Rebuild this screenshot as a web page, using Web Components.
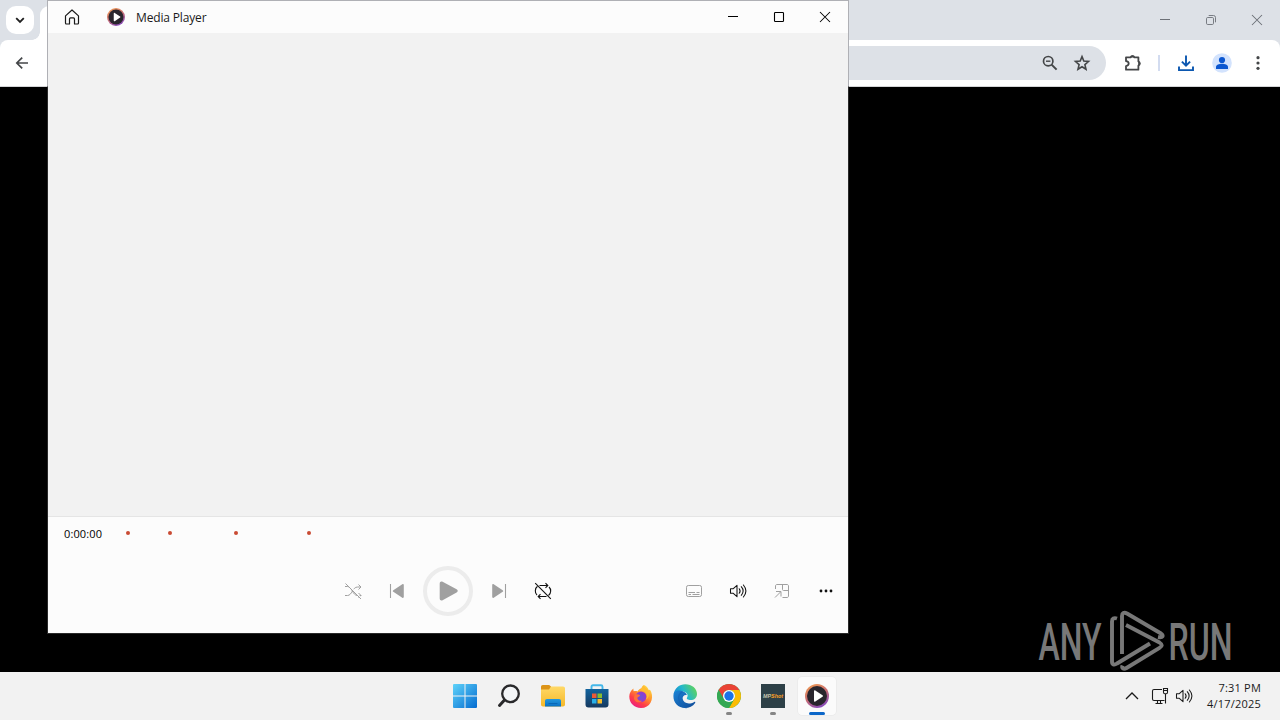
<!DOCTYPE html>
<html lang="en">
<head>
<meta charset="utf-8">
<title>Desktop</title>
<style>
    html, body {
        margin: 0;
        width: 1280px;
        height: 720px;
        overflow: hidden;
        background: #000;
        font-family: "Open Sans", "Noto Sans", sans-serif;
    }
</style>
</head>
<body>
<desk-top>
    <browser-window></browser-window>
    <media-player title-text="Media Player" time="0:00:00"></media-player>
    <any-run></any-run>
    <task-bar slot="taskbar">
        <task-button icon="start"></task-button>
        <task-button icon="search"></task-button>
        <task-button icon="folder"></task-button>
        <task-button icon="store"></task-button>
        <task-button icon="firefox"></task-button>
        <task-button icon="edge"></task-button>
        <task-button icon="chrome" running></task-button>
        <task-button icon="mpshot" running></task-button>
        <task-button icon="player" running active></task-button>
        <span slot="time">7:31 PM</span>
        <span slot="date">4/17/2025</span>
    </task-bar>
</desk-top>

<script>
// each entry: [viewBox size, markup]
const ICONS = {
    minimize: [12, '<path d="M1 5.5h10" stroke="currentColor"/>'],
    maximize: [12, '<rect x="1.5" y="1.5" width="9" height="9" rx=".8" fill="none" stroke="currentColor" stroke-width="1.1"/>'],
    restore: [12, '<g fill="none" stroke="currentColor" stroke-width=".9"><rect x="1.5" y="3.5" width="7" height="7" rx="1.2"/><path d="M3.7 1.5H8.5a2 2 0 0 1 2 2V8.3"/></g>'],
    close: [12, '<path d="M1 1l10 10M11 1L1 11" stroke="currentColor" stroke-width="1.05"/>'],
    chevron: [12, '<path d="M2.2 4.1L6 7.9l3.8-3.8" fill="none" stroke="currentColor" stroke-width="1.8"/>'],
    back: [16, '<path d="M14 8H3M8.2 2.6L2.8 8l5.4 5.4" fill="none" stroke="currentColor" stroke-width="1.7"/>'],
    zoomout: [16, '<g fill="none" stroke="currentColor" stroke-width="1.7"><circle cx="6.2" cy="6.2" r="4.7"/><path d="M9.6 9.6l5 5" stroke-width="2"/><path d="M4 6.2h4.4" stroke-width="1.4"/></g>'],
    star: [18, '<path d="M9 2.6l1.800 4.500 4.700.4-3.600 3.100 1.100 4.600L9 12.700l-4 2.500 1.100-4.600L2.500 7.500l4.700-.4z" fill="none" stroke="currentColor" stroke-width="1.600"/>'],
    puzzle: [20, '<path d="M4 4.300h4.600a2.100 2.100 0 0 1 3.800 0h4v4.200a2.200 2.200 0 0 1 0 4v4.200H4v-3.600c1.900-.2 2.700-1.200 2.700-2.500S5.900 8.300 4 8.100z" fill="none" stroke="currentColor" stroke-width="1.800" stroke-linejoin="round"/><path d="M8.200 4.600a2.300 2.300 0 0 1 4.600 0zM16.200 8.200a2.300 2.300 0 0 1 0 4.600z" fill="currentColor"/>'],
    download: [18, '<path d="M9 1.500v10M4.900 7.600L9 11.700l4.100-4.100M2 12.400v3.700h14v-3.700" fill="none" stroke="currentColor" stroke-width="1.900"/>'],
    avatar: [20, '<circle cx="10" cy="10" r="9.800" fill="#d3e3fd"/><circle cx="10" cy="7" r="3.100" fill="#0b57d0"/><path d="M4 16v-2.100c0-2.200 3.200-3.200 6-3.200s6 1 6 3.200V16z" fill="#0b57d0"/>'],
    kebab: [18, '<g fill="currentColor"><circle cx="9" cy="3.700" r="1.600"/><circle cx="9" cy="9" r="1.600"/><circle cx="9" cy="14.300" r="1.600"/></g>'],

    home: [16, '<path d="M1.500 6.900L8 1l6.500 5.900v7.200a.9.900 0 0 1-.9.900h-3.100V9.900a1 1 0 0 0-1-1h-3a1 1 0 0 0-1 1V15H2.400a.9.900 0 0 1-.9-.9z" fill="none" stroke="currentColor" stroke-width="1.200" stroke-linejoin="round"/>'],
    shuffle: [18, '<g fill="none" stroke="currentColor"><path d="M1 4.500h2.500c4.500 0 5 9 10 9H17M1 13.500h2.500c4.500 0 5-8.500 10-8.500H17M14.500 2.500L17 5l-2.500 2.500M14.500 11l2.500 2.500-2.500 2.500"/><path d="M2.500 1l15 15.500" stroke="#fcfcfc" stroke-width="1.500"/><path d="M1.500 1.500l15.500 15.500"/></g>'],
    prev: [16, '<path d="M1.500 1v14" stroke="currentColor" stroke-width="1.100"/><path d="M4.300 7.200l9-5.900c.8-.5 1.500 0 1.500.9v11.600c0 .9-.7 1.400-1.500.9l-9-5.900c-.7-.5-.7-1.100 0-1.600z" fill="currentColor"/>'],
    next: [16, '<path d="M14.500 1v14" stroke="currentColor" stroke-width="1.100"/><path d="M11.700 7.200l-9-5.900c-.8-.5-1.500 0-1.500.9v11.600c0 .9.700 1.400 1.500.9l9-5.900c.7-.5.7-1.100 0-1.600z" fill="currentColor"/>'],
    play: [24, '<path d="M3.700 4.500c0-1.700 1.400-2.500 2.900-1.700l14 7.500c1.500.8 1.500 2.400 0 3.200l-14 7.700c-1.500.8-2.900 0-2.900-1.700z" fill="currentColor"/>'],
    repeat: [18, '<g fill="none" stroke="currentColor" stroke-width="1.100"><path d="M5.500 3.500h8M11.500 1.200l2.300 2.300-2.300 2.300M12.500 14.500h-8M6.500 12.200l-2.300 2.300 2.300 2.300M3.500 4.300C.7 6.300.7 11 3 13M14.500 13.500c2.800-2 2.800-6.500.5-8.500"/><path d="M1.200 1.200l15.600 15.600"/></g>'],
    captions: [18, '<g fill="none" stroke="currentColor"><rect x="1.500" y="3.500" width="15" height="11" rx="1.800"/><path d="M3.500 10.500h6.500M11.500 10.500h3M3.500 12.500h2.500M7.500 12.500h7"/></g>'],
    volume: [18, '<g fill="none" stroke="currentColor" stroke-width="1.050" stroke-linejoin="round"><path d="M1.500 6.700h2.800L8 3.300v11.400l-3.700-3.400H1.500z"/><path d="M10.200 6.700c1.100 1.400 1.100 3.200 0 4.600M12.300 4.700c2.200 2.600 2.200 6 0 8.600M14.400 3c3.100 3.700 3.100 8.300 0 12" stroke-linecap="round"/></g>'],
    mini: [18, '<g fill="none" stroke="currentColor"><path d="M2.500 7V4c0-1 .7-1.500 1.500-1.500h10c1 0 1.500.7 1.500 1.500v10c0 1-.7 1.500-1.500 1.500H9.500M9.500 2.500v5c0 .8.500 1 1 1h5M2 15.500L7.500 10M3 9.500h5v5"/></g>'],
    more: [18, '<g fill="currentColor"><circle cx="4" cy="9" r="1.400"/><circle cx="9" cy="9" r="1.400"/><circle cx="14" cy="9" r="1.400"/></g>'],

    up: [16, '<path d="M2 11l6-6 6 6" fill="none" stroke="currentColor" stroke-width="1.300"/>'],
    network: [18, '<g fill="none" stroke="currentColor" stroke-width="1.100"><path d="M11 2.500H3c-1 0-1.500.6-1.500 1.500v8c0 1 .6 1.500 1.500 1.500h10.500M4.500 16.500h7M6.500 13.500v3M9.500 13.500v3"/><path d="M12.500 1.500h4v3.700c0 1-.6 1.500-1.300 1.500h-1.400c-.8 0-1.300-.5-1.300-1.500zM12.500 3.500h4M14.500 6.800V16.500"/></g>'],
    start: [24, '<defs><linearGradient id="w" gradientUnits="userSpaceOnUse" x1="0" y1="0" x2="24" y2="24"><stop stop-color="#5fd3fa"/><stop offset="1" stop-color="#046bd0"/></linearGradient></defs><path d="M0 1a1 1 0 0 1 1-1h10.500v11.500H0zM12.500 0H23a1 1 0 0 1 1 1v10.500H12.500zM0 12.500h11.500V24H1a1 1 0 0 1-1-1zM12.500 12.500H24V23a1 1 0 0 1-1 1H12.500z" fill="url(#w)"/>'],
    search: [24, '<circle cx="13.500" cy="9.800" r="8.300" fill="#f3f5f7" stroke="#29292b" stroke-width="2.300"/><path d="M7.500 16l-5 5.500" stroke="#29292b" stroke-width="3" stroke-linecap="round"/>'],
    folder: [26, '<defs><linearGradient id="y" x1="0" y1="0" x2="0" y2="1"><stop stop-color="#ffd967"/><stop offset="1" stop-color="#f5b829"/></linearGradient><linearGradient id="b" x1="0" y1="0" x2="0" y2="1"><stop stop-color="#2398df"/><stop offset="1" stop-color="#0870c4"/></linearGradient></defs><path d="M1 4c0-1.200.6-2 1.800-2h5.700c1 0 1.600.6 2.500 1.500V8H1z" fill="#dc9418"/><path d="M1 6.500h8L11 3.500h12c1.300 0 2 .8 2 2v16c0 1.200-.8 2-2 2H3c-1.200 0-2-.8-2-2z" fill="url(#y)"/><path d="M5 23.500v-5.500c0-1.200.8-2 2-2h12c1.200 0 2 .8 2 2v5.500z" fill="url(#b)"/><path d="M9 20.500h8" stroke="#0868b7" stroke-width="1.200" stroke-linecap="round"/>'],
    store: [24, '<defs><linearGradient id="s" x1="0" y1="0" x2="0" y2="1"><stop stop-color="#12649f"/><stop offset="1" stop-color="#16395f"/></linearGradient></defs><path d="M6.500 6V2.800c0-1 .5-1.500 1.500-1.500h8c1 0 1.500.5 1.500 1.500V6" fill="none" stroke="#44b7e9" stroke-width="1.900"/><path d="M.5 5h23v15.500a3 3 0 0 1-3 3h-17a3 3 0 0 1-3-3z" fill="url(#s)"/><path d="M7 9.500h4.500V14H7z" fill="#ee5936"/><path d="M12.500 9.500H17V14h-4.500z" fill="#86bd31"/><path d="M7 15h4.500v4.500H7z" fill="#29afe7"/><path d="M12.500 15H17v4.500h-4.500z" fill="#fabd28"/>'],
    firefox: [24, '<defs><linearGradient id="f" x1=".85" y1="0" x2=".2" y2="1"><stop stop-color="#ffe64a"/><stop offset=".42" stop-color="#ff922b"/><stop offset=".7" stop-color="#ff3f47"/><stop offset="1" stop-color="#e6188b"/></linearGradient><radialGradient id="p"><stop stop-color="#6b55d8"/><stop offset="1" stop-color="#9a37cc"/></radialGradient></defs><path d="M4.500 4.500c-.2 1.300 0 2 .3 2.700 1.500-.4 2.600-.3 3.700.2 1.200-2 2.500-3 4.500-3.500l2-3c2.800 1.300 4 3 4.600 5 1.300-.3 1.900.5 2.600 2C25 15 21 24 12 24 5 24 .3 18.800.3 12.500.3 9 2 6.500 4.500 4.500z" fill="url(#f)"/><circle cx="12" cy="12.800" r="5.400" fill="url(#p)"/><path d="M6.300 10.500c2-.7 3.500-.2 5 .9-1 1.300-2.500 1.500-3 2.500.4 2 2.200 3.500 4.700 2.800-2 2.800-6.800 1.800-7.800-1.500-.5-1.700 0-3.500 1.100-4.700z" fill="#ff7139"/><path d="M9 7.500c2.800-1.800 6.500-.7 8 1.500 1.300 2 1.300 4.700-.1 6.600 3.800-2.200 4.300-7.500 1.100-10.400-1.500-1.300-3-2.500-3.500-4.200-1.900 1.600-2 3-2.500 4.500-1.100.3-2.200 1-3 2z" fill="#ffbd32"/>'],
    edge: [24, '<defs><linearGradient id="e" x1="0" y1=".6" x2="1" y2=".2"><stop stop-color="#1684d4"/><stop offset=".45" stop-color="#24b8cb"/><stop offset="1" stop-color="#65d650"/></linearGradient><linearGradient id="d" x1="0" y1="0" x2="1" y2="1"><stop stop-color="#1b83d6"/><stop offset="1" stop-color="#114a96"/></linearGradient></defs><path d="M.5 10.500C1.500 4 6.300.2 12.300.2 19 .2 24 4.500 24 10c0 3.800-2.900 6.100-6.200 6.100-3 0-4.700-1.100-3.700-2.500 1.700-2.700-.5-5.600-4.500-6C5.500 7.200 2 8.200.5 10.500z" fill="url(#e)"/><path d="M.4 12C.5 7.600 4 5.900 8 6.800c3 .6 5.100 2.200 5.900 4.300-2.700-.6-4.700 1.200-4.200 4 .7 4 6.200 5.900 11.500 2.800.8-.4 1.400.2.900 1C20 22.200 16 24 12 24 5.200 24 .3 18.600.4 12z" fill="url(#d)"/><path d="M9.700 7.600c-3.600 1.800-4.800 5.300-3.500 9.200 1.300 4 4.500 6.600 7.500 7.100" fill="none" stroke="#1363b5" stroke-width="1.300" opacity=".65"/>'],
    chrome: [24, '<circle cx="12" cy="12" r="12" fill="#34a853"/><path d="M1.610 6A12 12 0 0 1 22.390 6H12a6 6 0 0 0-5.200 9z" fill="#ea4335"/><path d="M22.390 6A12 12 0 0 1 12 24l5.200-9A6 6 0 0 0 12 6z" fill="#fbbc04"/><path d="M1.610 6L6.800 15a6 6 0 0 0 10.400 0L12 24A12 12 0 0 1 1.610 6z" fill="#34a853"/><circle cx="12" cy="12" r="6" fill="#fff"/><circle cx="12" cy="12" r="4.700" fill="#1a73e8"/>'],
    mpshot: [24, '<path d="M0 0h24v24H0z" fill="#2d4047"/><text x="2" y="14.300" fill="#c4c4ae" textLength="20" lengthAdjust="spacingAndGlyphs" font-family="Liberation Sans, sans-serif" font-weight="700" font-style="italic" font-size="6">MP<tspan fill="#ffa126">Shot</tspan></text>'],
    player: [24, '<defs><linearGradient id="m" x1=".2" y1="0" x2=".7" y2="1"><stop stop-color="#f09a52"/><stop offset=".5" stop-color="#c66c76"/><stop offset="1" stop-color="#844ac0"/></linearGradient></defs><circle cx="12" cy="12" r="12" fill="url(#m)"/><circle cx="12" cy="12" r="10" fill="#29252d"/><path d="M9 7.200c0-.8.600-1.100 1.300-.7l7.200 4.700c.6.400.6 1.100 0 1.500l-7.200 4.800c-.7.400-1.300.1-1.300-.7z" fill="#fff"/>']
};

class SvgIcon extends HTMLElement {
    connectedCallback() {
        const [box, markup] = ICONS[this.getAttribute('name')];
        const size = this.getAttribute('size') || box;
        this.attachShadow({ mode: 'open' });
        this.shadowRoot.innerHTML = `
            <style>
                :host { display: flex; align-items: center; justify-content: center; flex: none; }
                svg { display: block; overflow: visible; }
            </style>
            <svg width="${size}" height="${size}" viewBox="0 0 ${box} ${box}">${markup}</svg>
        `;
    }
}
customElements.define('svg-icon', SvgIcon);

class DeskTop extends HTMLElement {
    constructor() {
        super();
        this.attachShadow({ mode: 'open' });
        this.shadowRoot.innerHTML = `
            <style>
                :host {
                    display: grid;
                    grid-template-rows: 672px 48px;
                    position: relative;
                    width: 1280px;
                    height: 720px;
                }
                .area { min-height: 0; }
            </style>
            <div class="area"><slot></slot></div>
            <slot name="taskbar"></slot>
        `;
    }
}
customElements.define('desk-top', DeskTop);

class WindowControls extends HTMLElement {
    connectedCallback() {
        const middle = this.hasAttribute('maximized') ? 'restore' : 'maximize';
        this.attachShadow({ mode: 'open' });
        this.shadowRoot.innerHTML = `
            <style>
                :host { display: flex; height: 100%; margin-left: auto; }
                svg-icon { width: 46px; }
            </style>
            <svg-icon name="minimize"></svg-icon>
            <svg-icon name="${middle}"></svg-icon>
            <svg-icon name="close"></svg-icon>
        `;
    }
}
customElements.define('window-controls', WindowControls);

class BrowserWindow extends HTMLElement {
    constructor() {
        super();
        this.attachShadow({ mode: 'open' });
        this.shadowRoot.innerHTML = `
            <style>
                :host { display: flex; flex-direction: column; height: 672px; background: #000; }
                .tabs { display: flex; height: 40px; background: #dde1e7; }
                .tab-search {
                    display: flex;
                    align-items: center;
                    justify-content: center;
                    width: 28px;
                    height: 28px;
                    margin: 6px;
                    border-radius: 10px;
                    background: #fff;
                    color: #1f1f1f;
                }
                .tab {
                    width: 200px;
                    margin-top: 6px;
                    border-radius: 9px 9px 0 0;
                    background: #fff;
                }
                .tab::before {
                    content: "";
                    display: block;
                    width: 8px;
                    height: 8px;
                    margin: 26px 0 0 -8px;
                    background: radial-gradient(circle at 0 0, transparent 7.5px, #fff 8px);
                }
                window-controls { color: #6c7077; }
                .bar-bg { background: #dde1e7; }
                .toolbar {
                    display: flex;
                    align-items: center;
                    box-sizing: border-box;
                    height: 47px;
                    padding: 0 4px;
                    border-bottom: 1px solid #d4d5d7;
                    border-radius: 8px 8px 0 0;
                    background: #fff;
                    color: #444648;
                }
                .toolbar > svg-icon { width: 36px; }
                .address {
                    display: flex;
                    align-items: center;
                    justify-content: flex-end;
                    box-sizing: border-box;
                    flex: 1;
                    height: 34px;
                    margin: 0 8px 0 80px;
                    padding-right: 8px;
                    border-radius: 17px;
                    background: #dde1e7;
                }
                .address svg-icon { width: 32px; }
                .divider { width: 2px; height: 16px; margin: 0 8px; background: #d3dcf0; }
                .toolbar > .download { color: #0b57b0; }
            </style>
            <div class="tabs">
                <div class="tab-search"><svg-icon name="chevron"></svg-icon></div>
                <div class="tab"></div>
                <window-controls maximized></window-controls>
            </div>
            <div class="bar-bg">
                <div class="toolbar">
                    <svg-icon name="back"></svg-icon>
                    <div class="address">
                        <svg-icon name="zoomout"></svg-icon>
                        <svg-icon name="star"></svg-icon>
                    </div>
                    <svg-icon name="puzzle"></svg-icon>
                    <div class="divider"></div>
                    <svg-icon class="download" name="download"></svg-icon>
                    <svg-icon name="avatar"></svg-icon>
                    <svg-icon name="kebab"></svg-icon>
                </div>
            </div>
        `;
    }
}
customElements.define('browser-window', BrowserWindow);

class MediaPlayer extends HTMLElement {
    connectedCallback() {
        this.attachShadow({ mode: 'open' });
        this.shadowRoot.innerHTML = `
            <style>
                :host {
                    position: absolute;
                    left: 47px;
                    top: 0;
                    display: grid;
                    grid-template-rows: 32px 1fr 117px;
                    box-sizing: border-box;
                    width: 802px;
                    height: 634px;
                    border: 1px solid #292929;
                    background: #f2f2f2;
                    color: #1a1a1a;
                    border-image: linear-gradient(#afb0b5 86px, #292929 87px) 1;
                }
                header { display: flex; align-items: center; background: #fcfcfc; font-size: 12px; }
                header .home { width: 48px; }
                header .logo { width: 40px; }
                header span { line-height: 16px; padding-top: 2px; letter-spacing: -.15px; }
                window-controls { color: #000; }
                footer {
                    display: flex;
                    flex-direction: column;
                    border-top: 1px solid #e5e5e5;
                    background: #fcfcfc;
                }
                .seek { display: flex; align-items: center; height: 32px; padding-left: 16px; }
                .seek span { width: 61px; padding-top: 2px; font-size: 11px; line-height: 16px; letter-spacing: .12px; color: #000; }
                .seek i { width: 4px; height: 4px; border-radius: 50%; background: #c94b33; }
                .controls {
                    display: grid;
                    grid-template-columns: 1fr auto 1fr;
                    align-items: center;
                    height: 50px;
                    margin-top: 17px;
                }
                .group { display: flex; align-items: center; grid-column: 2; color: #a0a0a0; }
                .group.end { grid-column: 3; justify-content: flex-end; }
                .group svg-icon { width: 44px; }
                .group .play {
                    box-sizing: border-box;
                    width: 50px;
                    height: 50px;
                    margin: 0 4px;
                    border: 4px solid #ececec;
                    border-radius: 50%;
                }
                .group .on { color: #111; }
            </style>
            <header>
                <svg-icon class="home" name="home"></svg-icon>
                <svg-icon class="logo" name="player" size="18"></svg-icon>
                <span>${this.getAttribute('title-text')}</span>
                <window-controls></window-controls>
            </header>
            <main></main>
            <footer>
                <div class="seek">
                    <span>${this.getAttribute('time')}</span>
                    <i style="margin-left: .5px"></i>
                    <i style="margin-left: 38px"></i>
                    <i style="margin-left: 62.5px"></i>
                    <i style="margin-left: 68.5px"></i>
                </div>
                <div class="controls">
                    <div class="group">
                        <svg-icon name="shuffle"></svg-icon>
                        <svg-icon name="prev"></svg-icon>
                        <svg-icon class="play" name="play"></svg-icon>
                        <svg-icon name="next"></svg-icon>
                        <svg-icon class="on" name="repeat"></svg-icon>
                    </div>
                    <div class="group end">
                        <svg-icon name="captions"></svg-icon>
                        <svg-icon class="on" name="volume"></svg-icon>
                        <svg-icon name="mini"></svg-icon>
                        <svg-icon class="on" name="more"></svg-icon>
                    </div>
                </div>
            </footer>
        `;
    }
}
customElements.define('media-player', MediaPlayer);

// watermark over the lower right corner of the desktop
class AnyRun extends HTMLElement {
    constructor() {
        super();
        this.attachShadow({ mode: 'open' });
        this.shadowRoot.innerHTML = `
            <style>
                :host { position: absolute; left: 1036px; top: 606px; display: block; }
                svg { display: block; }
                text { font-family: Roboto, sans-serif; font-size: 51px; font-weight: 500; }
            </style>
            <svg width="220" height="68" viewBox="0 0 220 68">
                <g fill="#787878">
                    <text x="2.500" y="53.500" textLength="63" lengthAdjust="spacingAndGlyphs">ANY</text>
                    <text x="132.500" y="53.500" textLength="64" lengthAdjust="spacingAndGlyphs">RUN</text>
                </g>
                <g fill="none" stroke="#787878" stroke-width="3.900" stroke-linejoin="round">
                    <path d="M81 12.500c-3-1-5 0-5 3v40c0 3 2 4 5 2l33-20"/>
                    <path d="M86 48V10c0-3 2-4 5-2.500l34 20c3 2 2 4.500-3 3.500"/>
                    <path d="M90 19l33.500 17.500c3 2 3 3.500 0 5.300L90.500 62c-3 1.800-5 0-4-2.500"/>
                </g>
            </svg>
        `;
    }
}
customElements.define('any-run', AnyRun);

class TaskButton extends HTMLElement {
    connectedCallback() {
        this.attachShadow({ mode: 'open' });
        const icon = this.getAttribute('icon');
        this.shadowRoot.innerHTML = `
            <style>
                :host {
                    position: relative;
                    display: flex;
                    align-items: center;
                    justify-content: center;
                    width: 38px;
                    height: 38px;
                    margin: 1px;
                    border-radius: 4px;
                }
                :host([active]) { background: #fbfbfb; box-shadow: 0 0 0 .5px #e5e5e5; }
                .mark { display: none; position: absolute; bottom: 0; left: 16px; width: 6px; height: 3px; border-radius: 2px; background: #858585; }
                :host([running]) .mark { display: block; }
                :host([active]) .mark { left: 11px; width: 16px; background: #0c67c9; }
            </style>
            <svg-icon name="${icon}"></svg-icon>
            <div class="mark"></div>
        `;
    }
}
customElements.define('task-button', TaskButton);

class TaskBar extends HTMLElement {
    constructor() {
        super();
        this.attachShadow({ mode: 'open' });
        this.shadowRoot.innerHTML = `
            <style>
                :host {
                    display: grid;
                    grid-template-columns: 1fr auto 1fr;
                    align-items: center;
                    background: #f2f2f2;
                    color: #1a1a1a;
                }
                .apps { display: flex; gap: 4px; grid-column: 2; padding-left: 2px; }
                .tray { display: flex; align-items: center; justify-content: flex-end; padding-right: 19px; }
                .up { width: 32px; }
                .net { width: 24px; }
                .vol { width: 24px; }
                .clock {
                    display: flex;
                    flex-direction: column;
                    align-items: flex-end;
                    width: 65px;
                    font-size: 11px;
                    line-height: 16px;
                    letter-spacing: .2px;
                }
            </style>
            <div class="apps"><slot></slot></div>
            <div class="tray">
                <svg-icon class="up" name="up"></svg-icon>
                <svg-icon class="net" name="network"></svg-icon>
                <svg-icon class="vol" name="volume"></svg-icon>
                <div class="clock"><slot name="time"></slot><slot name="date"></slot></div>
            </div>
        `;
    }
}
customElements.define('task-bar', TaskBar);
</script>
</body>
</html>
